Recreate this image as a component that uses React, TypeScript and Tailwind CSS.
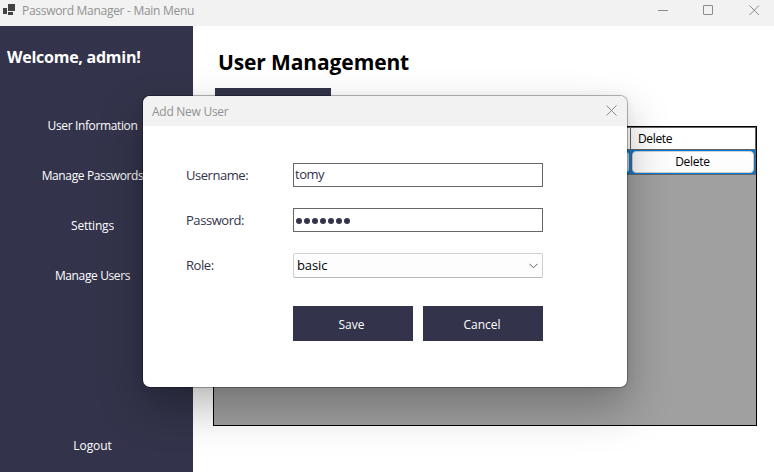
import type { ReactNode } from 'react';

function NavItem({ children, spacing = 'tracking-[-0.37px]' }: { children: ReactNode; spacing?: string }) {
  return (
    <button
      className={`flex h-[50px] w-[185px] shrink-0 items-center justify-center text-[12px] whitespace-nowrap text-white ${spacing}`}
    >
      {children}
    </button>
  );
}

function TitleBar() {
  return (
    <header className="flex h-[26px] shrink-0 items-start bg-[#f2f2f2]">
      <svg className="mt-1 ml-[3px] h-3 w-3 shrink-0" viewBox="0 0 12 12" fill="#424242" shapeRendering="crispEdges">
        <rect x="0" y="4" width="4" height="6" />
        <rect x="5" y="0" width="7" height="7" />
        <rect x="5" y="8" width="5" height="3" />
      </svg>
      <span className="ml-[7px] text-[12px] leading-[22px] tracking-[-0.29px] whitespace-nowrap text-[#919191]">
        Password Manager - Main Menu
      </span>
      <svg className="mt-[5px] mr-[13px] ml-auto h-[11px] w-[103px]" viewBox="0 0 103 11" fill="none" stroke="#8b8b8b">
        <path d="M0 5.5H10" />
        <rect x="45.5" y="0.5" width="9" height="9" rx="0.5" />
        <path d="M91.5 .5L101 10M101 .5L91.5 10" />
      </svg>
    </header>
  );
}

function UserGrid() {
  return (
    <div className="mt-[30px] flex h-[300px] w-[544px] flex-col border border-black bg-[#a0a0a0]">
      <div className="flex h-[23px] shrink-0 border-y border-[#666] bg-white">
        <div className="w-[417px] border-r border-[#666]" />
        <div className="flex flex-1 items-center border-r border-[#666] pl-[7px] text-[12px] leading-[21px] text-black">
          <span className="tracking-[-0.35px]">Delete</span>
        </div>
      </div>
      <div className="flex h-[25px] shrink-0 border-b border-[#666] bg-[#0078d7]">
        <div className="w-[417px] border-r border-[#666] pr-px">
          <div className="h-[22px] w-full translate-y-px rounded-[4px] border border-[#c8c8c8] bg-[#fdfdfd]" />
        </div>
        <div className="flex-1 border-r border-[#666] p-px">
          <div className="flex h-[22px] items-center justify-center rounded-[4px] border border-[#d0d0d0] bg-[#fdfdfd] pr-px text-[12px] text-black">
            <span className="tracking-[-0.25px]">Delete</span>
          </div>
        </div>
      </div>
    </div>
  );
}

function FieldLabel({ children }: { children: ReactNode }) {
  return <label className="w-[107px] text-[13px] leading-6 tracking-[-0.45px] text-[#33334b]">{children}</label>;
}

function AddUserDialog() {
  return (
    <section className="absolute top-[95px] left-[142px] h-[293px] w-[486px] overflow-hidden rounded-[8px] border border-[#00000048] bg-white bg-clip-padding shadow-[0_20px_44px_rgba(0,0,0,0.27),0_0_10px_rgba(0,0,0,0.06)]">
      <div className="flex h-[30px] items-center justify-between bg-[#f2f2f2] pr-[10px] pl-[9px]">
        <span className="pt-px text-[12px] tracking-[-0.27px] text-[#919191]">Add New User</span>
        <svg className="mb-[2px] h-[11px] w-[11px]" viewBox="0 0 11 11" fill="none" stroke="#8b8b8b">
          <path d="M.5 .5L10.5 10.5M10.5 .5L.5 10.5" />
        </svg>
      </div>
      <form className="flex flex-col pt-[37px] pl-[43px]">
        <div className="flex h-[45px] items-start">
          <FieldLabel>Username:</FieldLabel>
          <div className="h-6 w-[250px] border border-[#666] pl-px text-[13px] leading-[21px] tracking-[-0.5px] text-[#33334b]">
            tomy
          </div>
        </div>
        <div className="flex h-[45px] items-start">
          <FieldLabel>Password:</FieldLabel>
          <div className="flex h-6 w-[250px] items-center gap-[1.5px] border border-[#666] pt-[2px] pl-[1.75px]">
            {[0, 1, 2, 3, 4, 5, 6].map((dot) => (
              <span key={dot} className="size-[6.5px] rounded-full bg-[#33334b]" />
            ))}
          </div>
        </div>
        <div className="flex h-[53px] items-start">
          <FieldLabel>Role:</FieldLabel>
          <div className="flex h-[25px] w-[250px] items-center justify-between rounded-[2px] border border-[#cfcfcf] border-b-[#b8b8b8] bg-[#fdfdfd] pr-1 pl-[3px] text-[13px] text-black">
            <span className="pt-px tracking-[-0.1px]">basic</span>
            <svg className="h-[6px] w-[9px]" viewBox="0 0 9 6" fill="none" stroke="#606060">
              <path d="M.5 .8L4.5 4.8L8.5 .8" />
            </svg>
          </div>
        </div>
        <div className="flex gap-[10px] pl-[107px] text-[12px] text-white">
          <button type="button" className="h-[35px] w-[120px] bg-[#33334b] pt-[2px] pr-[3px]">Save</button>
          <button type="button" className="h-[35px] w-[120px] bg-[#33334b] pt-[2px] pr-[2px]">Cancel</button>
        </div>
      </form>
    </section>
  );
}

export default function App() {
  return (
    <div className="relative flex h-[472px] w-[774px] flex-col overflow-hidden bg-white font-['Open_Sans','Noto_Sans',sans-serif]">
      <TitleBar />
      <div className="flex flex-1">
        <aside className="flex w-[193px] flex-col bg-[#33334b]">
          <h2 className="h-[75px] pt-[19px] pl-[7px] text-[16px] leading-6 font-bold tracking-[-0.25px] whitespace-nowrap text-white">
            Welcome, admin!
          </h2>
          <NavItem>User Information</NavItem>
          <NavItem>Manage Passwords</NavItem>
          <NavItem spacing="tracking-[-0.2px]">Settings</NavItem>
          <NavItem>Manage Users</NavItem>
          <div className="mt-auto mb-px flex">
            <NavItem spacing="tracking-[-0.1px]">Logout</NavItem>
          </div>
        </aside>
        <main className="flex flex-1 flex-col pl-5">
          <h1 className="h-[62px] pt-5 pl-[5px] text-[21px] leading-8 font-bold tracking-[-0.12px] text-black">
            User Management
          </h1>
          <div className="ml-[2px] h-[8px] w-[116px] bg-[#33334b]" />
          <UserGrid />
        </main>
      </div>
      <AddUserDialog />
    </div>
  );
}
